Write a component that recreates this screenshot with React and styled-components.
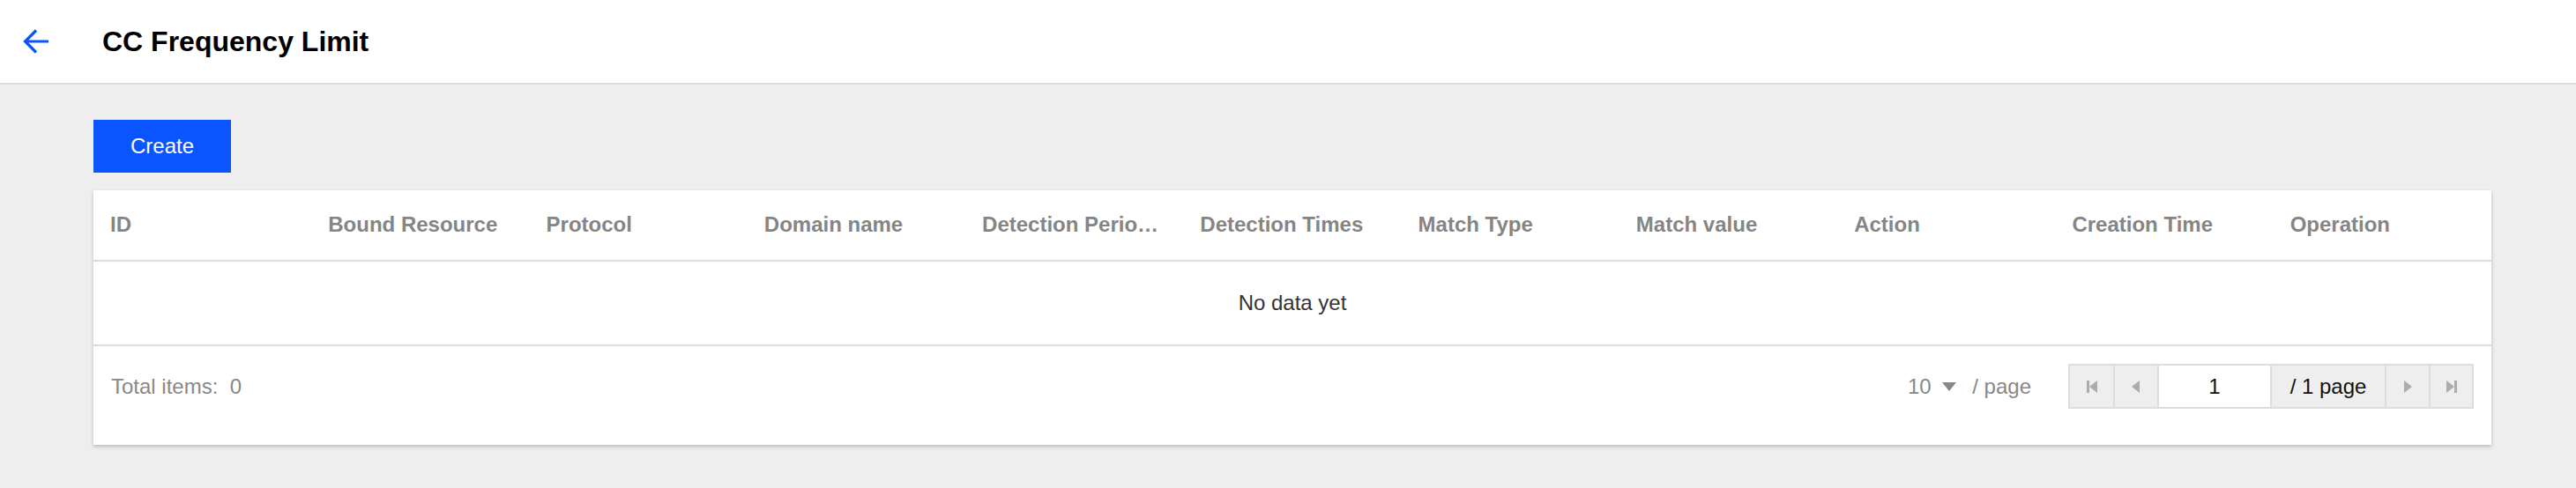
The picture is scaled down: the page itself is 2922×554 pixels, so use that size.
import React from 'react'
import styled, { createGlobalStyle } from 'styled-components';

const GlobalStyle = createGlobalStyle`
  html, body {
    margin: 0;
    padding: 0;
    background: #eeeeee;
    font-family: "Liberation Sans", Helvetica, Arial, sans-serif;
  }
  * { box-sizing: border-box; }
`;

const columns = [
  'ID',
  'Bound Resource',
  'Protocol',
  'Domain name',
  'Detection Period (seconds)',
  'Detection Times',
  'Match Type',
  'Match value',
  'Action',
  'Creation Time',
  'Operation',
];

const PageStyles = styled.div`
  min-height: 554px;
  background: #eeeeee;
`;

const TopBar = styled.header`
  display: flex;
  align-items: center;
  height: 96px;
  padding-left: 26px;
  background: #fff;
  border-bottom: 2px solid #dcdcdc;
`;

const BackButton = styled.button`
  display: flex;
  align-items: center;
  padding: 0;
  margin: 0 60px 0 0;
  border: none;
  background: none;
  cursor: pointer;
  svg { display: block; }
`;

const Title = styled.h1`
  margin: 0;
  font-size: 32px;
  font-weight: 700;
  color: #000;
  line-height: 1;
`;

const Content = styled.main`
  padding: 40px 96px 0 106px;
`;

const PrimaryButton = styled.button`
  width: 156px;
  height: 60px;
  border: none;
  border-radius: 0;
  background: #0a55ff;
  color: #fff;
  font-family: inherit;
  font-size: 24px;
  cursor: pointer;
`;

const Card = styled.section`
  margin-top: 20px;
  background: #fff;
  box-shadow: 0 2px 4px rgba(0, 0, 0, 0.22);
`;

const Table = styled.table`
  width: 100%;
  table-layout: fixed;
  border-collapse: collapse;

  th {
    height: 80px;
    padding: 0 20px 2px 19px;
    text-align: left;
    font-size: 24px;
    font-weight: 700;
    color: #858585;
    white-space: nowrap;
    overflow: hidden;
    text-overflow: ellipsis;
    border-bottom: 2px solid #dddddd;
  }

  td.empty {
    height: 96px;
    text-align: center;
    font-size: 24px;
    color: #333;
    border-bottom: 2px solid #dddddd;
  }
`;

const Footer = styled.div`
  display: flex;
  justify-content: space-between;
  align-items: center;
  padding: 20px 20px 41px 20px;
  font-size: 24px;
  color: #888;
`;

const FooterRight = styled.div`
  display: flex;
  align-items: center;
  gap: 42px;
`;

const PageSize = styled.div`
  display: flex;
  align-items: center;
  gap: 12px;
  color: #888;
`;

const Pager = styled.div`
  display: flex;
  height: 51px;
  border: 2px solid #dddddd;
`;

const PagerButton = styled.button`
  display: flex;
  align-items: center;
  justify-content: center;
  width: ${p => p.$w || 50}px;
  padding: 0;
  border: none;
  border-left: ${p => (p.$first ? 'none' : '2px solid #dddddd')};
  background: ${p => (p.$white ? '#fff' : '#eeeeee')};
  color: #111;
  font-family: inherit;
  font-size: 24px;
`;

function PageIcon({ dir, bar }) {
  const flip = dir === 'right' ? 'scale(-1,1) translate(-12,0)' : undefined;
  return (
    <svg width="12" height="14" viewBox="0 0 12 14">
      <g transform={flip} fill="#acacac">
        {bar && <rect x="0" y="0" width="3" height="14" />}
        <polygon points={bar ? '12,0 12,14 3,7' : '10,0 10,14 1,7'} />
      </g>
    </svg>
  );
}

function App() {
  return (
    <PageStyles>
      <GlobalStyle />
      <TopBar>
        <BackButton aria-label="back">
          <svg width="30" height="28" viewBox="0 0 30 28">
            <path d="M29 14H3M15 1.5L2.5 14L15 26.5" fill="none" stroke="#0a55ff" strokeWidth="3.2" />
          </svg>
        </BackButton>
        <Title>CC Frequency Limit</Title>
      </TopBar>
      <Content>
        <PrimaryButton>Create</PrimaryButton>
        <Card>
          <Table>
            <thead>
              <tr>
                {columns.map(c => (
                  <th key={c}>{c}</th>
                ))}
              </tr>
            </thead>
            <tbody>
              <tr>
                <td className="empty" colSpan={columns.length}>No data yet</td>
              </tr>
            </tbody>
          </Table>
          <Footer>
            <span>Total items:&nbsp; 0</span>
            <FooterRight>
              <PageSize>
                <span>10</span>
                <svg width="16" height="10" viewBox="0 0 16 10">
                  <polygon points="0,0 16,0 8,10" fill="#888" />
                </svg>
                <span>&nbsp;/ page</span>
              </PageSize>
              <Pager>
                <PagerButton $first $w={49}><PageIcon dir="left" bar /></PagerButton>
                <PagerButton><PageIcon dir="left" /></PagerButton>
                <PagerButton $w={128} $white>1</PagerButton>
                <PagerButton $w={130}>/ 1 page</PagerButton>
                <PagerButton><PageIcon dir="right" /></PagerButton>
                <PagerButton $w={49}><PageIcon dir="right" bar /></PagerButton>
              </Pager>
            </FooterRight>
          </Footer>
        </Card>
      </Content>
    </PageStyles>
  )
}

export default App
